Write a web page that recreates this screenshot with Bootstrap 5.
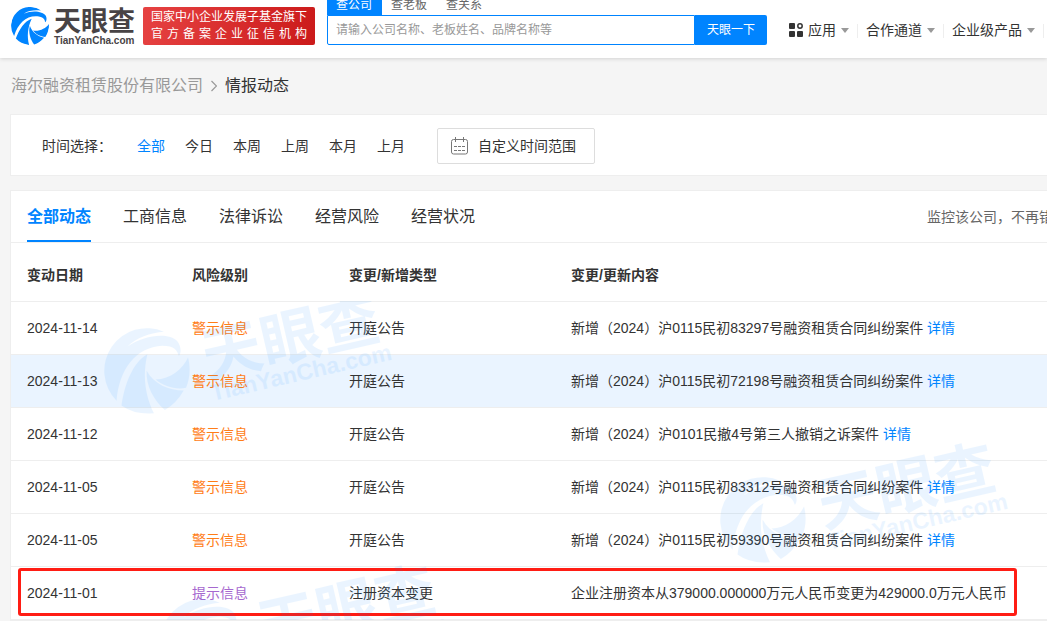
<!DOCTYPE html>
<html lang="zh-CN">
<head>
<meta charset="utf-8">
<meta name="viewport" content="width=device-width, initial-scale=1">
<title>情报动态</title>
<link href="https://cdn.jsdelivr.net/npm/bootstrap@5.3.0/dist/css/bootstrap.min.css" rel="stylesheet">
<style>
:root { --brand: #0084ff; --line: #eee; }
body { font-family: "Liberation Sans", "Noto Sans CJK SC", sans-serif; font-size: 14px; line-height: 20px; color: #333; background: #f5f5f5; overflow-x: hidden; }
body::-webkit-scrollbar { display: none; }
a { color: var(--brand); text-decoration: none; }
.topbar { height: 58px; background: #fff; box-shadow: 0 1px 4px rgba(0,0,0,.14); padding: 0 3px 0 11px; white-space: nowrap; }
.brand-logo { width: 124px; height: 42px; margin: 5px 8px 0 0; color: var(--brand); overflow: visible; }
.wordmark { font-family: "Noto Sans CJK SC", sans-serif; font-weight: 700; }
.wordmark-latin { font-family: "Liberation Sans", sans-serif; font-weight: 700; }
.record { width: 172px; height: 38px; margin: 7px 12px 0 0; padding: 2px 8px; border-radius: 2px; background: linear-gradient(100deg, #e64242, #cb1a1a); color: #fff; font-size: 12px; line-height: 17px; }
.record span { display: block; text-align-last: justify; }
.search-tabs { height: 15px; align-items: flex-end; font-size: 12px; line-height: 20px; }
.search-tabs a { color: #666; margin-left: 9px; padding-right: 10px; }
.search-tabs a.active { background: var(--brand); color: #fff; margin: 0; padding: 0 10px 0 9px; }
.search-row { height: 30px; }
.search-row input { border: 1px solid var(--brand); border-radius: 0 0 0 2px; padding: 0 8px; font-size: 12px; min-width: 0; outline: 0; }
.search-row input::placeholder { color: #999; }
.search-row button { width: 72px; border: 0; background: var(--brand); color: #fff; font-size: 12px; border-radius: 0 2px 2px 0; }
.topnav { margin: 20px 0 0 22px; }
.topnav a { color: #333; padding-right: 9px; margin-right: 8px; position: relative; gap: 5px; }
.topnav a:last-child { margin-right: 0; }
.topnav a::after { content: ""; position: absolute; right: 0; top: 4px; height: 14px; border-right: 1px solid var(--line); }
.caret { border: 4px solid transparent; border-top: 5px solid #999; border-bottom: 0; }
.page { padding-left: 10px; }
.crumbs { font-size: 16px; line-height: 24px; padding: 16px 0 16px 1px; }
.crumbs a { color: #999; }
.panel { background: #fff; border: 1px solid var(--line); border-right: 0; }
.filters { height: 62px; margin-bottom: 14px; padding: 2px 0 0 31px; }
.filters .choices { gap: 20px; margin: 0 32px 0 25px; }
.filters .choices a { color: #333; }
.filters .choices a.active { color: var(--brand); }
.range-btn { height: 36px; width: 158px; border: 1px solid #ddd; border-radius: 2px; background: #fff; color: #333; padding: 0 12px; gap: 9px; }
.type-tabs { height: 52px; gap: 32px; padding-left: 16px; font-size: 16px; border-bottom: 1px solid var(--line); white-space: nowrap; }
.type-tabs a { color: #333; line-height: 52px; height: 51px; }
.type-tabs a.active { color: var(--brand); font-weight: 700; border-bottom: 2px solid var(--brand); }
.type-tabs .monitor { margin: 0 -6px 0 auto; font-size: 14px; line-height: 52px; color: #666; }
.feed { width: 100%; table-layout: fixed; white-space: nowrap; }
.feed th { height: 58px; padding: 6px 0 0 16px; }
.feed td { height: 53px; padding-left: 16px; }
.feed tr { border-bottom: 1px solid var(--line); }
.feed .c-date { width: 165px; } .feed .c-level { width: 157px; } .feed .c-type { width: 222px; }
.feed tr.current { background: #eaf4ff; }
.warn { color: #ff7d18; }
.hint { color: #a668cf; }
.callout { position: absolute; inset: 2px 30px 2px 7px; border: 3px solid #ff1d14; border-radius: 3px; }
.stamps { position: absolute; inset: 58px 0 0 0; overflow: hidden; color: var(--brand); opacity: .08; pointer-events: none; }
.stamps svg { position: absolute; width: 310px; height: 150px; }
</style>
</head>
<body>
<svg width="0" height="0" class="position-absolute" aria-hidden="true">
  <defs>
    <symbol id="mark" viewBox="24 26 260 260">
      <g fill="currentColor">
        <path d="M62 246A129 129 0 0 1 205 37C165 40 120 55 95 82C150 44 220 40 245 65C258 80 258 105 250 110C245 95 238 80 200 80C120 85 70 150 62 246Z"/>
        <path d="M155 105C110 130 85 200 77 260Q115 288 175 284C148 230 140 170 155 105Z"/>
        <path d="M153 155C150 200 175 245 208 274Q242 255 265 215C220 215 175 195 153 155Z"/>
        <path d="M180 182C225 180 262 150 278 115C286 145 284 180 272 207C240 213 205 203 180 182Z"/>
      </g>
    </symbol>
    <symbol id="stamp" viewBox="0 0 310 150">
      <use href="#mark" x="7" y="63" width="86" height="86"/>
      <g transform="rotate(-13 50 105)" fill="currentColor">
        <text class="wordmark" x="107" y="127" font-size="60">天眼查</text>
        <text class="wordmark-latin" x="107" y="150" font-size="23">TianYanCha.com</text>
      </g>
    </symbol>
  </defs>
</svg>

<header class="topbar d-flex align-items-start position-relative">
  <a href="#" class="flex-shrink-0" aria-label="天眼查">
    <svg class="brand-logo d-block" viewBox="0 0 124 42">
      <g transform="rotate(12 19 21)"><use href="#mark" x="0" y="2" width="38" height="38"/></g>
      <text class="wordmark" x="43" y="26" font-size="27" fill="#484345">天眼查</text>
      <text class="wordmark-latin" x="43" y="39" font-size="10" fill="#484345">TianYanCha.com</text>
    </svg>
  </a>
  <div class="record flex-shrink-0"><span>国家中小企业发展子基金旗下</span><span>官方备案企业征信机构</span></div>
  <form class="flex-grow-1" role="search">
    <nav class="search-tabs d-flex"><a href="#" class="active">查公司</a><a href="#">查老板</a><a href="#">查关系</a></nav>
    <div class="search-row d-flex">
      <input class="flex-grow-1" type="text" aria-label="搜索" placeholder="请输入公司名称、老板姓名、品牌名称等">
      <button type="button">天眼一下</button>
    </div>
  </form>
  <nav class="topnav d-flex flex-shrink-0">
    <a href="#" class="d-flex align-items-center">
      <svg width="14" height="14" viewBox="0 0 14 14" fill="#333"><rect width="6" height="6" rx="1"/><rect y="8" width="6" height="6" rx="1"/><rect x="8" y="8" width="6" height="6" rx="1"/><circle cx="11" cy="3" r="2.2" fill="none" stroke="#333" stroke-width="1.5"/></svg>
      <span>应用</span><i class="caret"></i></a>
    <a href="#" class="d-flex align-items-center"><span>合作通道</span><i class="caret"></i></a>
    <a href="#" class="d-flex align-items-center"><span>企业级产品</span><i class="caret"></i></a>
  </nav>
</header>

<main class="page">
  <nav class="crumbs d-flex align-items-center">
    <a href="#">海尔融资租赁股份有限公司</a>
    <svg class="mx-2" width="6" height="12" viewBox="0 0 6 12" fill="none" stroke="#999" stroke-width="1.2"><path d="M.5 1 5.5 6 .5 11"/></svg>
    <span>情报动态</span>
  </nav>

  <section class="panel filters d-flex align-items-center">
    <span>时间选择：</span>
    <nav class="choices d-flex"><a href="#" class="active">全部</a><a href="#">今日</a><a href="#">本周</a><a href="#">上周</a><a href="#">本月</a><a href="#">上月</a></nav>
    <button type="button" class="range-btn d-flex align-items-center">
      <svg width="19" height="18" viewBox="0 0 19 18" fill="none" stroke="#777"><rect x="1.5" y="2.5" width="16" height="14.5" rx="2"/><path d="M5.5 0v5M13.5 0v5M4 9.5h3M8 9.5h3M12 9.5h3M4 13.5h3M8 13.5h3M12 13.5h3"/></svg>
      <span>自定义时间范围</span>
    </button>
  </section>

  <section class="panel">
    <nav class="type-tabs d-flex">
      <a href="#" class="active">全部动态</a><a href="#">工商信息</a><a href="#">法律诉讼</a><a href="#">经营风险</a><a href="#">经营状况</a>
      <span class="monitor">监控该公司，不再错</span>
    </nav>
    <div class="position-relative">
      <table class="feed">
        <thead><tr><th class="c-date">变动日期</th><th class="c-level">风险级别</th><th class="c-type">变更/新增类型</th><th>变更/更新内容</th></tr></thead>
        <tbody>
          <tr><td>2024-11-14</td><td class="warn">警示信息</td><td>开庭公告</td><td>新增（2024）沪0115民初83297号融资租赁合同纠纷案件 <a href="#">详情</a></td></tr>
          <tr class="current"><td>2024-11-13</td><td class="warn">警示信息</td><td>开庭公告</td><td>新增（2024）沪0115民初72198号融资租赁合同纠纷案件 <a href="#">详情</a></td></tr>
          <tr><td>2024-11-12</td><td class="warn">警示信息</td><td>开庭公告</td><td>新增（2024）沪0101民撤4号第三人撤销之诉案件 <a href="#">详情</a></td></tr>
          <tr><td>2024-11-05</td><td class="warn">警示信息</td><td>开庭公告</td><td>新增（2024）沪0115民初83312号融资租赁合同纠纷案件 <a href="#">详情</a></td></tr>
          <tr><td>2024-11-05</td><td class="warn">警示信息</td><td>开庭公告</td><td>新增（2024）沪0115民初59390号融资租赁合同纠纷案件 <a href="#">详情</a></td></tr>
          <tr class="position-relative"><td>2024-11-01</td><td class="hint">提示信息</td><td>注册资本变更</td><td>企业注册资本从379000.000000万元人民币变更为429000.0万元人民币<span class="callout"></span></td></tr>
        </tbody>
      </table>
      <div class="stamps" aria-hidden="true">
        <svg style="left:86px;top:-36px"><use href="#stamp"/></svg>
        <svg style="left:702px;top:113px"><use href="#stamp"/></svg>
        <svg style="left:142px;top:235px"><use href="#stamp"/></svg>
      </div>
    </div>
  </section>
</main>
<script src="https://cdn.jsdelivr.net/npm/bootstrap@5.3.0/dist/js/bootstrap.bundle.min.js"></script>
</body>
</html>
